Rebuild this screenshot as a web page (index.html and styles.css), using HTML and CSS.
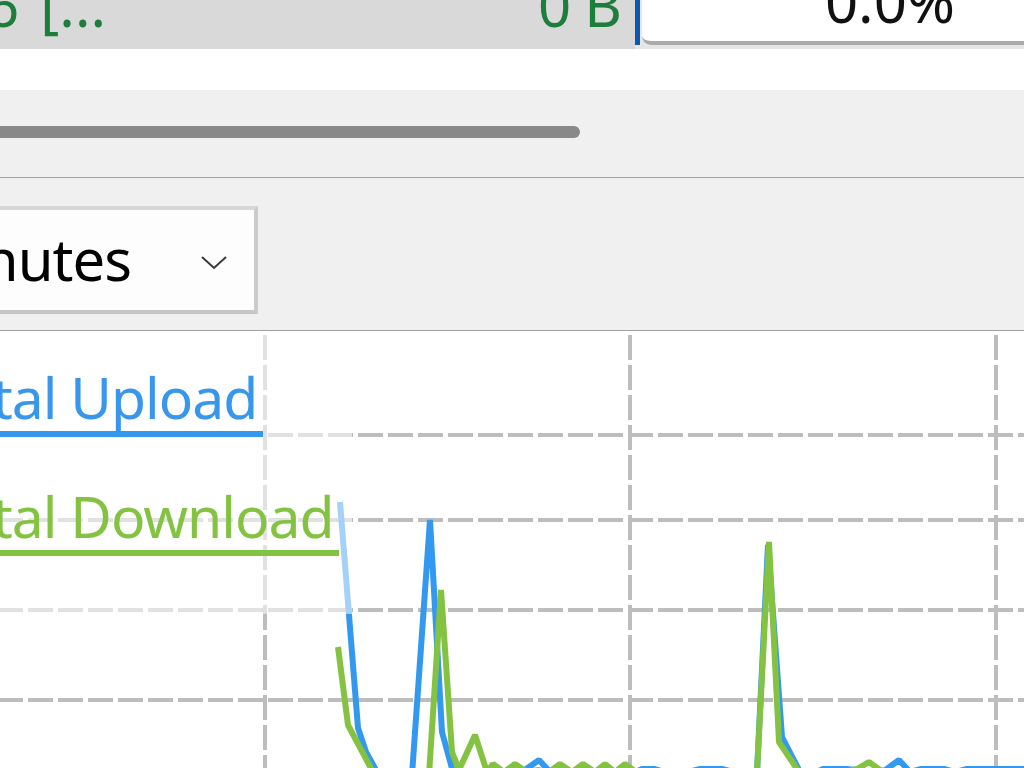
FILE: index.html
```html
<!DOCTYPE html>
<html lang="en">
<head>
    <meta charset="UTF-8">
    <title>Speed graph</title>
    <link rel="stylesheet" href="styles.css">
</head>
<body>

<div class="row-top">
    <div class="name-cell">
        <span class="name">6 [...</span>
        <span class="size">0 B</span>
    </div>
    <div class="row-sep"></div>
    <div class="progress-cell"><span class="progress-text">0.0%</span></div>
</div>

<div class="gap"></div>

<div class="hscroll">
    <div class="hscroll-thumb"></div>
</div>

<div class="toolbar">
    <div class="combo">
        <span class="combo-text">5 Minutes</span>
        <svg class="combo-arrow" width="26" height="14" viewBox="0 0 26 14">
            <polyline points="1,1 13,12 25,1" fill="none" stroke="#3a3a3a" stroke-width="2"/>
        </svg>
    </div>
</div>

<div class="chart">
    <svg class="plot" width="1024" height="437" viewBox="0 331 1024 437">
        <g class="grid">
            <line x1="265" y1="335" x2="265" y2="780"/>
            <line x1="630" y1="335" x2="630" y2="780"/>
            <line x1="996" y1="335" x2="996" y2="780"/>
            <line x1="-2" y1="435" x2="1030" y2="435"/>
            <line x1="-2" y1="520" x2="1030" y2="520"/>
            <line x1="-2" y1="610" x2="1030" y2="610"/>
            <line x1="-2" y1="700" x2="1030" y2="700"/>
        </g>
        <polyline class="series upload" points="340,502 351,640 358,728 366,752 377,772 390,774 403,772 412,775 430,520 442,732 453,772 465,774 476,772 488,774 500,772 511,774 522,772 539,760 550,772 562,774 573,772 585,774 596,772 608,774 620,772 631,774 642,769 654,769 665,772 676,774 688,772 700,769 711,769 722,769 734,772 745,774 757,772 768,545 782,737 800,772 812,774 823,769 835,769 846,769 857,770 869,772 880,774 899,760 910,772 921,769 933,769 944,769 955,772 967,769 978,769 989,769 1001,769 1012,769 1030,769"/>
        <polyline class="series download" points="338,647 348,725 373,772 385,774 397,772 408,774 419,772 429,775 441,590 452,752 459,770 475,735 487,772 493,764 504,772 515,764 527,772 538,770 549,772 560,764 572,772 583,764 595,772 605,764 615,772 625,764 636,772 647,774 659,772 670,774 682,772 693,774 705,772 716,774 728,772 739,774 757,772 769,542 779,742 799,772 812,774 823,772 835,774 846,772 857,769 869,762 880,770 891,772 902,774 913,772 925,774 936,772 947,774 958,772 970,774 981,772 993,774 1004,772 1030,772"/>
    </svg>

    <div class="legend">
        <div class="legend-item upload">Total Upload</div>
        <div class="legend-item download">Total Download</div>
    </div>
</div>

</body>
</html>
```

FILE: styles.css
```css
body {
    margin: 0;
    width: 1024px;
    height: 768px;
    overflow: hidden;
    background: white;
    font-family: "Noto Sans", "Open Sans", sans-serif;
}

.row-top {
    display: flex;
    height: 49px;
    background: #e6e6e6;
}

.name-cell {
    display: flex;
    justify-content: space-between;
    align-items: flex-end;
    flex-shrink: 0;
    width: 635px;
    padding-right: 14px;
    padding-bottom: 15px;
    box-sizing: border-box;
    overflow: hidden;
    background: #d9d9d9;
    color: #1d7d3b;
    font-size: 58px;
    line-height: 58px;
    white-space: nowrap;
}

.name-cell .name {
    margin-left: -14px;
    word-spacing: 6px;
}

.name-cell .size {
    letter-spacing: -1px;
}

.row-sep {
    flex-shrink: 0;
    width: 5px;
    height: 45px;
    background: #0f5aa8;
}

.progress-cell {
    display: flex;
    justify-content: center;
    align-items: flex-end;
    flex-shrink: 0;
    width: 496px;
    height: 45px;
    margin-left: 2px;
    padding-bottom: 11px;
    box-sizing: border-box;
    background: white;
    border-bottom: 4px solid #ababab;
    border-bottom-left-radius: 9px;
    overflow: hidden;
    color: #111;
    font-size: 58px;
    line-height: 58px;
}

.gap {
    height: 41px;
}

.hscroll {
    height: 88px;
    padding-top: 36px;
    box-sizing: border-box;
    background: #f0f0f0;
    border-bottom: 1px solid #a3a3a3;
}

.hscroll-thumb {
    width: 580px;
    height: 12px;
    background: #898989;
    border-radius: 0 6px 6px 0;
}

.toolbar {
    height: 153px;
    padding-top: 28px;
    box-sizing: border-box;
    background: #f0f0f0;
    border-bottom: 1px solid #a0a0a0;
}

.combo {
    display: flex;
    align-items: center;
    justify-content: flex-end;
    width: 418px;
    height: 108px;
    margin-left: -160px;
    padding: 0 27px 3px 0;
    box-sizing: border-box;
    background: #fdfdfd;
    border-top: 4px solid #d6d6d6;
    border-right: 4px solid #cbcbcb;
    border-bottom: 4px solid #c6c6c6;
    color: #000;
    font-size: 58px;
    line-height: 58px;
    letter-spacing: -1px;
    white-space: nowrap;
}

.combo-arrow {
    flex-shrink: 0;
    margin-left: 70px;
    margin-top: 8px;
}

.chart {
    position: relative;
    height: 437px;
    background: white;
}

.plot {
    display: block;
}

.grid line {
    stroke: #bdbdbd;
    stroke-width: 4;
    stroke-dasharray: 25 5;
}

.series {
    fill: none;
    stroke-width: 6;
    stroke-linejoin: bevel;
}

.series.upload {
    stroke: #3399f0;
}

.series.download {
    stroke: #84c341;
}

.legend {
    position: absolute;
    top: 0;
    left: -68px;
    display: flex;
    flex-direction: column;
    align-items: flex-start;
    gap: 51px;
    width: 420px;
    height: 283px;
    padding-top: 38px;
    box-sizing: border-box;
    background: rgba(255, 255, 255, 0.55);
    font-size: 57px;
    line-height: 57px;
    letter-spacing: -1px;
    white-space: nowrap;
}

.legend-item {
    padding-right: 6px;
    padding-bottom: 5px;
    border-bottom: 6px solid;
}

.legend-item.upload {
    color: #3897ec;
    border-color: #3399f0;
}

.legend-item.download {
    color: #84c341;
    border-color: #84c341;
}
```
